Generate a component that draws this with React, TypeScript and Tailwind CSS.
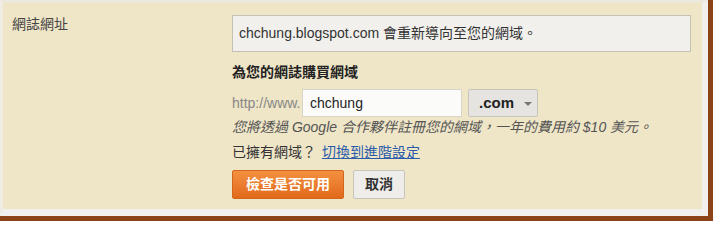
const font = { fontFamily: '"Liberation Sans", Arial, "Noto Sans CJK TC", sans-serif' };

export default function App() {
  return (
    <div className="w-[713px] h-[221px] bg-[#8a4415] pr-[5px] pb-[5px]" style={font}>
      <div className="h-full border-t-[3px] border-l-[3px] border-r-[6px] border-b-[7px] border-t-[#ebe8dc] border-l-[#efece4] border-r-[#f1f0ec] border-b-[#f1f0ec] bg-[#efe5c7]">
        <div className="flex pt-[12px] pl-[9px] text-[14px]">
          <div className="w-[220px] shrink-0 leading-[18px] text-[#444]">網誌網址</div>

          <div className="flex flex-col">
            <div className="w-[459px] h-[37px] flex items-center px-[6px] border border-[#c5c1b4] bg-[#f1f0ed] text-[#333]">
              chchung.blogspot.com 會重新導向至您的網域。
            </div>

            <h2 className="mt-[10px] leading-[20px] font-bold text-[#222]">為您的網誌購買網域</h2>

            <div className="mt-[7px] flex items-center">
              <span className="w-[70px] text-[#888]">http://www.</span>
              <div className="w-[160px] h-[28px] flex items-center px-[7px] border border-[#d8d4c8] bg-[#fbfbfa] text-[#222]">
                chchung
              </div>
              <button className="ml-[6px] w-[70px] h-[28px] flex items-center pl-[10px] gap-[10px] rounded-[2px] border border-[#c8c5bd] bg-[#e5e4e1] font-bold text-[15px] text-[#222]">
                .com
                <span className="mt-[2px] border-x-[4px] border-t-[4px] border-x-transparent border-t-[#777]" />
              </button>
            </div>

            <p className="mt-[1px] leading-[18px] italic text-[#555]">
              您將透過 Google 合作夥伴註冊您的網域，一年的費用約 $10 美元。
            </p>

            <div className="mt-[6px] leading-[20px] text-[#333]">
              已擁有網域？{" "}
              <a className="ml-[2px] text-[#2a5caa] underline">切換到進階設定</a>
            </div>

            <div className="mt-[8px] flex gap-[9px]">
              <button className="w-[112px] h-[29px] rounded-[2px] border border-[#d4661c] bg-gradient-to-b from-[#f4903f] to-[#e2691a] font-bold text-white">
                檢查是否可用
              </button>
              <button className="w-[52px] h-[29px] rounded-[2px] border border-[#c8c5bd] bg-[#eeedea] font-bold text-[#333]">
                取消
              </button>
            </div>
          </div>
        </div>
      </div>
    </div>
  );
}
